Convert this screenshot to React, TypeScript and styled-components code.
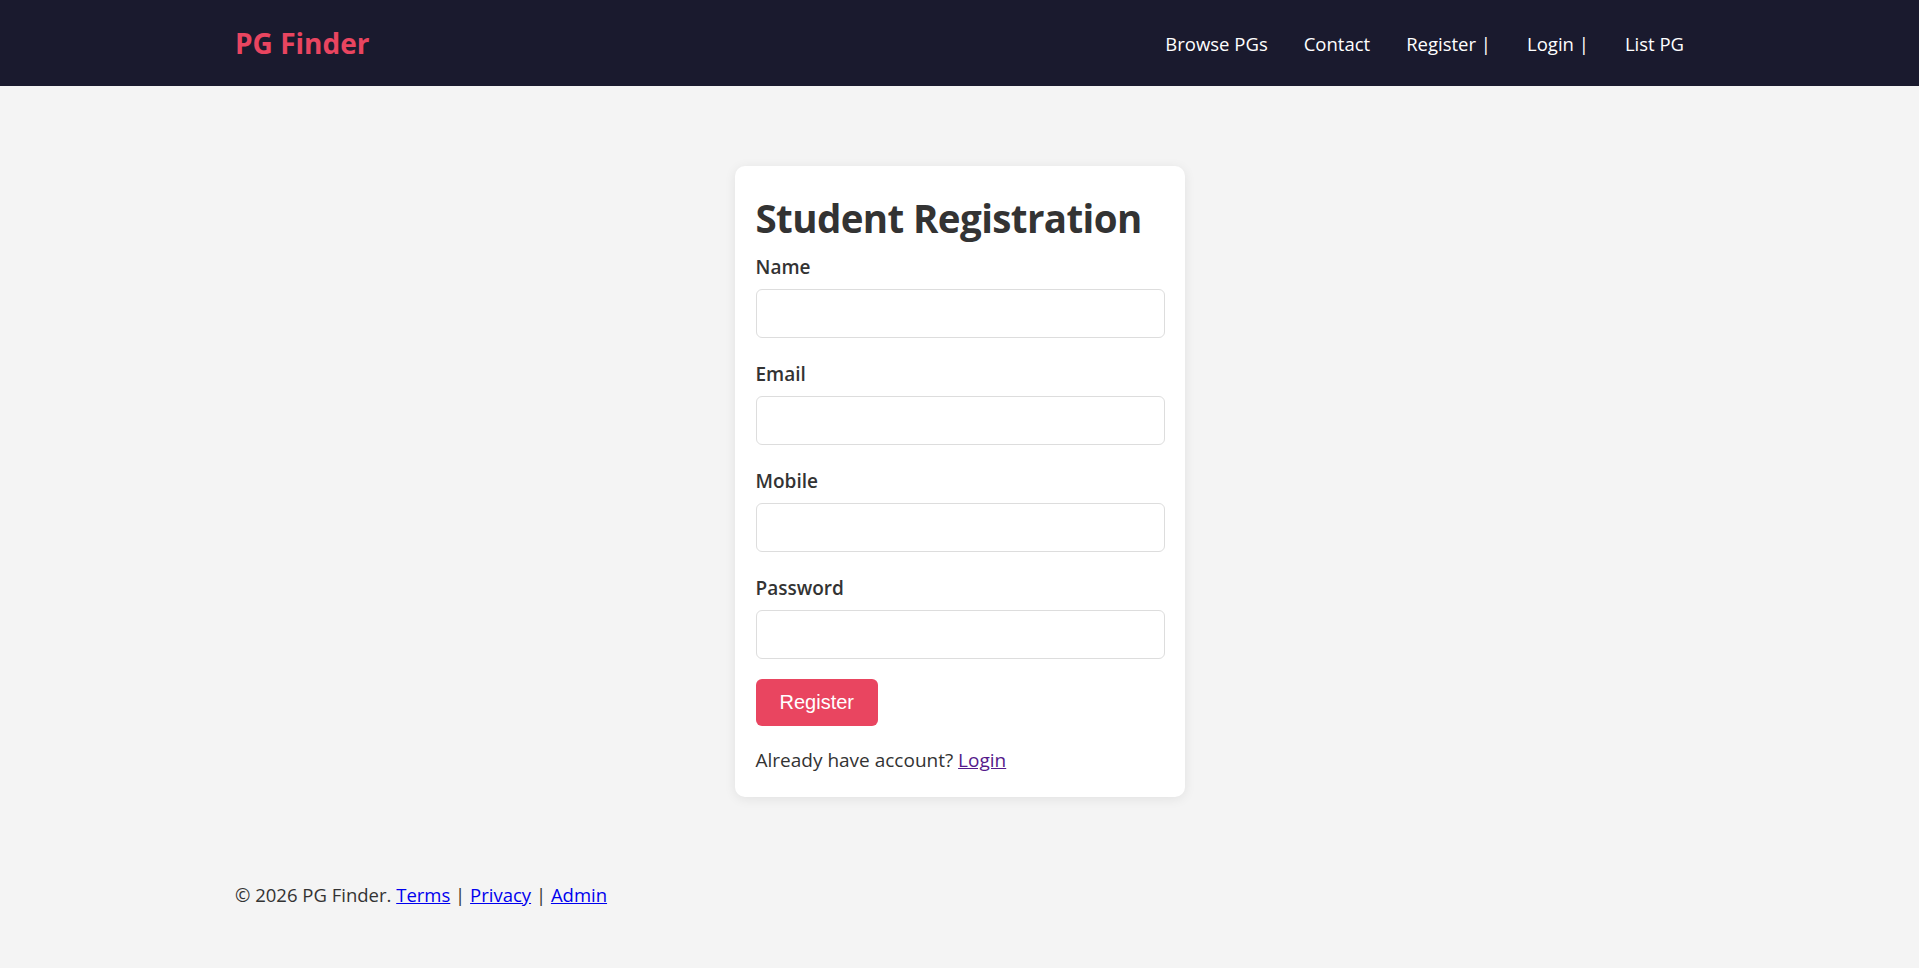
import React from 'react';
import styled, { createGlobalStyle } from 'styled-components';

const sans = `"Segoe UI", "Open Sans", "Noto Sans", sans-serif`;

const GlobalStyle = createGlobalStyle`
  * {
    box-sizing: border-box;
  }
  body {
    margin: 0;
    background: #f4f4f4;
    color: #333;
    font-family: ${sans};
    font-size: 18.5px;
  }
`;

const Header = styled.header`
  background: #1a1a2e;
  height: 86px;
`;

const HeaderInner = styled.div`
  width: 1449px;
  height: 100%;
  margin: 0 auto;
  display: flex;
  align-items: center;
  justify-content: space-between;
`;

const Logo = styled.div`
  color: #e94560;
  font-size: 28px;
  font-weight: 700;
`;

const Nav = styled.nav`
  display: flex;
  gap: 36px;
`;

const NavLink = styled.a`
  color: #fff;
  text-decoration: none;
  font-size: 18.5px;
`;

const Main = styled.main`
  display: flex;
  justify-content: center;
  padding: 80px 0 85px;
`;

const Card = styled.section`
  width: 450px;
  background: #fff;
  border-radius: 10px;
  padding: 26px 20px 23px 21px;
  box-shadow: 0 2px 12px rgba(0, 0, 0, 0.08);
`;

const Title = styled.h2`
  margin: 0 0 10px;
  font-size: 38.5px;
  font-weight: 700;
  letter-spacing: -0.6px;
  line-height: 52px;
  white-space: nowrap;
  color: #333;
`;

const Field = styled.div`
  margin-bottom: 23px;
`;

const Label = styled.label`
  display: block;
  font-size: 19px;
  font-weight: 600;
  line-height: 27px;
  margin-bottom: 8px;
`;

const Input = styled.input`
  display: block;
  width: 100%;
  height: 49px;
  border: 1px solid #ddd;
  border-radius: 6px;
  padding: 0 12px;
  font-size: 18px;
  background: #fff;
`;

const Button = styled.button`
  display: block;
  margin-top: -3px;
  height: 47px;
  padding: 0 24px;
  border: none;
  border-radius: 6px;
  background: #e94560;
  color: #fff;
  font-family: "Liberation Sans", Arial, sans-serif;
  font-size: 20px;
  cursor: pointer;
`;

const Note = styled.p`
  margin: 21px 0 0;
  font-size: 19px;
  line-height: 27px;
  a {
    color: #551a8b;
  }
`;

const Footer = styled.footer`
  width: 1449px;
  margin: 0 auto;
  font-size: 18.5px;
  a {
    color: #0000ee;
  }
`;

const fields = ['Name', 'Email', 'Mobile', 'Password'];

export default function App() {
  return (
    <>
      <GlobalStyle />
      <Header>
        <HeaderInner>
          <Logo>PG Finder</Logo>
          <Nav>
            <NavLink href="#">Browse PGs</NavLink>
            <NavLink href="#">Contact</NavLink>
            <NavLink href="#">Register |</NavLink>
            <NavLink href="#">Login |</NavLink>
            <NavLink href="#">List PG</NavLink>
          </Nav>
        </HeaderInner>
      </Header>
      <Main>
        <Card>
          <Title>Student Registration</Title>
          {fields.map((f) => (
            <Field key={f}>
              <Label>{f}</Label>
              <Input type={f === 'Password' ? 'password' : 'text'} />
            </Field>
          ))}
          <Button>Register</Button>
          <Note>
            Already have account? <a href="#">Login</a>
          </Note>
        </Card>
      </Main>
      <Footer>
        © 2026 PG Finder. <a href="#">Terms</a> | <a href="#">Privacy</a> | <a href="#">Admin</a>
      </Footer>
    </>
  );
}
